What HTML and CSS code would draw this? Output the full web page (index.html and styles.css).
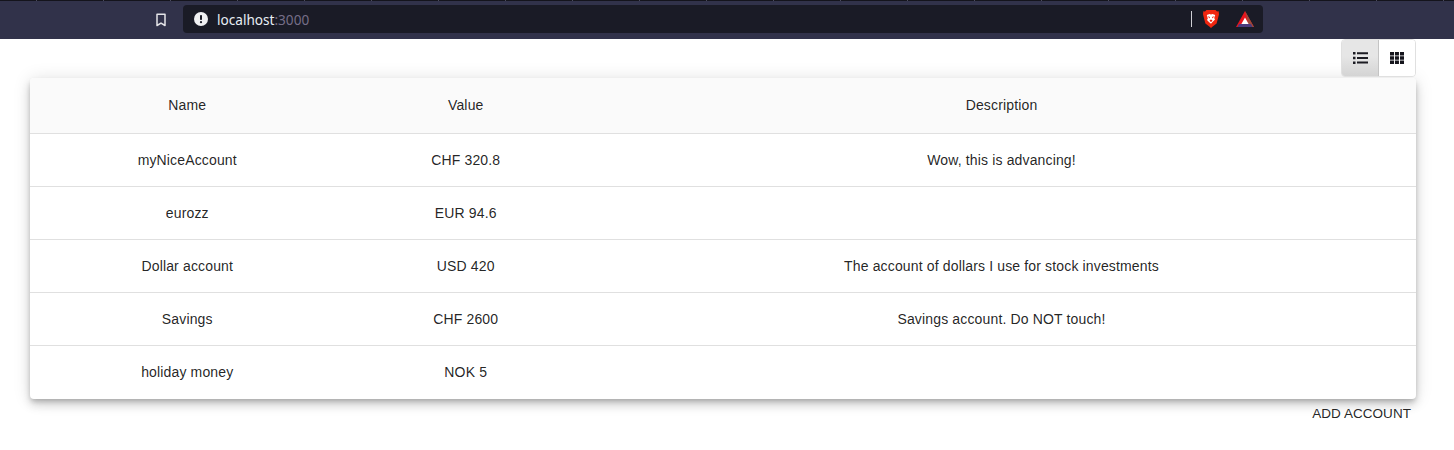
FILE: index.html
```html
<!DOCTYPE html>
<html lang="en">
<head>
<meta charset="utf-8">
<title>Accounts</title>
<link rel="stylesheet" href="styles.css">
</head>
<body>
<header class="browser">
  <div class="browser-ticks"></div>
  <div class="browser-bar">
    <svg class="bookmark" width="12" height="14" viewBox="0 0 12 14"><path d="M2 1.200h8v11.300l-4-2.400-4 2.400z" fill="none" stroke="#e4e4e8" stroke-width="1.500" stroke-linejoin="round"/></svg>
    <div class="urlbar">
      <svg class="info" width="14" height="14" viewBox="0 0 14 14"><circle cx="7" cy="7" r="7" fill="#f1f1f3"/><rect x="6" y="3" width="2" height="5" rx=".8" fill="#1a1b26"/><circle cx="7" cy="10.200" r="1.100" fill="#1a1b26"/></svg>
      <span class="host">localhost<span class="port">:3000</span></span>
      <span class="sep"></span>
      <svg class="brave" width="16" height="18" viewBox="0 0 16 18"><path d="M3.500 0h9l1.500 1.500 1.700-.3.300 3-.8 3.200-1.600 6-3.600 2.900L8 18l-2-1.700-3.600-2.900-1.600-6L0 4.200l.3-3 1.700.3z" fill="#f0260f"/><path d="M3.800 5l2.700-1 1.500.5 1.500-.5 2.700 1-1 3 .8 1.400-2.500 2.500L8 13.700l-1.500-1.300L4 9.900l.8-1.400z" fill="#fff"/><path d="M4.800 6.300l2.200.7-.6 1.600zM11.200 6.300L9 7l.6 1.600zM7 9.700h2l.4 1.200L8 12l-1.400-1.100z" fill="#f0260f"/></svg>
      <svg class="bat" width="18" height="16" viewBox="0 0 18 16"><path d="M9 0L0 16h18z" fill="#e8141c"/><path d="M9 0l9 16h-5z" fill="#9c4a3a"/><path d="M3 13h12l1.500 3h-15z" fill="#4b3a7c"/><path d="M9 6.500L5.400 13h7.200z" fill="#fff"/></svg>
    </div>
  </div>
</header>
<main class="page">
  <div class="toolbar">
    <div class="toggle">
      <button class="toggle-btn is-active" aria-label="list">
        <svg width="15" height="12" viewBox="0 0 15 12"><path d="M0 0h2.500v2.500H0zM0 4.700h2.500v2.500H0zM0 9.400h2.500v2.500H0zM4 .2h11v2H4zM4 4.900h11v2H4zM4 9.600h11v2H4z" fill="#1b1b22"/></svg>
      </button>
      <button class="toggle-btn" aria-label="grid">
        <svg width="14" height="12" viewBox="0 0 15 12" preserveAspectRatio="none"><path d="M0 0h4.300v3.500H0zM5.300 0h4.300v3.500H5.300zM10.700 0H15v3.500h-4.300zM0 4.300h4.300v3.500H0zM5.300 4.300h4.300v3.500H5.300zM10.700 4.300H15v3.500h-4.300zM0 8.500h4.300V12H0zM5.300 8.500h4.300V12H5.300zM10.700 8.500H15V12h-4.300z" fill="#15151c"/></svg>
      </button>
    </div>
  </div>
  <div class="card">
    <table class="accounts">
      <colgroup><col class="col-name"><col class="col-value"><col></colgroup>
      <thead>
        <tr><th>Name</th><th>Value</th><th>Description</th></tr>
      </thead>
      <tbody>
        <tr><td>myNiceAccount</td><td>CHF 320.8</td><td>Wow, this is advancing!</td></tr>
        <tr><td>eurozz</td><td>EUR 94.6</td><td></td></tr>
        <tr><td>Dollar account</td><td>USD 420</td><td>The account of dollars I use for stock investments</td></tr>
        <tr><td>Savings</td><td>CHF 2600</td><td>Savings account. Do NOT touch!</td></tr>
        <tr><td>holiday money</td><td>NOK 5</td><td></td></tr>
      </tbody>
    </table>
  </div>
  <div class="actions">
    <button class="add">ADD ACCOUNT</button>
  </div>
</main>
</body>
</html>
```
FILE: styles.css
```css
* { box-sizing: border-box; }

html, body {
  margin: 0;
  height: 450px;
  overflow: hidden;
  background: #fff;
}

body {
  font-family: "Liberation Sans", Arial, sans-serif;
  font-size: 14px;
  letter-spacing: .15px;
  color: rgba(0, 0, 0, .87);
}

.browser {
  height: 39px;
  background: #31324a;
  letter-spacing: 0;
}

.browser-ticks {
  height: 1px;
  background: repeating-linear-gradient(90deg, #14141c 0, #14141c 36px, #4a4a5c 36px, #4a4a5c 37px, #14141c 37px, #14141c 67px);
}

.browser-bar {
  display: flex;
  align-items: flex-start;
  padding: 4px 191px 0 155px;
}

.bookmark { margin-top: 8px; }

.urlbar {
  flex: 1;
  height: 28px;
  margin-left: 16px;
  padding: 0 9px 0 11px;
  display: flex;
  align-items: center;
  background: #1a1b26;
  border-radius: 4px;
}

.host {
  margin-left: 9px;
  font-family: "Noto Sans", sans-serif;
  font-size: 13.6px;
  color: #e8eef4;
}

.port { color: #766e88; }

.sep {
  width: 1px;
  height: 16px;
  margin-left: auto;
  background: #cfcfd4;
}

.brave { margin-left: 11px; }
.bat { margin-left: 17px; }

.page { padding: 0 38px 0 30px; }

.toolbar {
  display: flex;
  justify-content: flex-end;
}

.toggle {
  display: flex;
  height: 38px;
  border: 1px solid #e0e0e0;
  border-radius: 4px;
  overflow: hidden;
}

.toggle-btn {
  width: 36px;
  padding: 0;
  display: flex;
  align-items: center;
  justify-content: center;
  background: #fff;
  border: 0;
}

.toggle-btn.is-active {
  width: 37px;
  background: linear-gradient(#e6e6e6 45%, #d4d4d4);
  border-right: 1px solid #c4c4c4;
}

.card {
  background: #fff;
  border-radius: 4px;
  overflow: hidden;
  margin-top: 1px;
  box-shadow: 0 3px 5px -1px rgba(0,0,0,.2), 0 6px 10px 0 rgba(0,0,0,.14), 0 1px 18px 0 rgba(0,0,0,.12);
}

.accounts {
  width: 100%;
  table-layout: fixed;
  border-collapse: collapse;
}

.col-name { width: 314.5px; }
.col-value { width: 242.5px; }

.accounts th,
.accounts td {
  padding: 0 16px;
  text-align: center;
  font-weight: 400;
  height: 53px;
  border-bottom: 1px solid #e0e0e0;
}

.accounts th {
  height: 55px;
  background: #fafafa;
}

.accounts tbody tr:last-child td {
  height: 54px;
  padding-bottom: 1px;
  border-bottom: 0;
}

.actions {
  display: flex;
  justify-content: flex-end;
  padding: 6px 5px 0 0;
}

.add {
  padding: 0;
  background: none;
  border: 0;
  font-family: inherit;
  font-size: 13.5px;
  letter-spacing: .05px;
  line-height: 17px;
  color: rgba(0, 0, 0, .87);
}
```
